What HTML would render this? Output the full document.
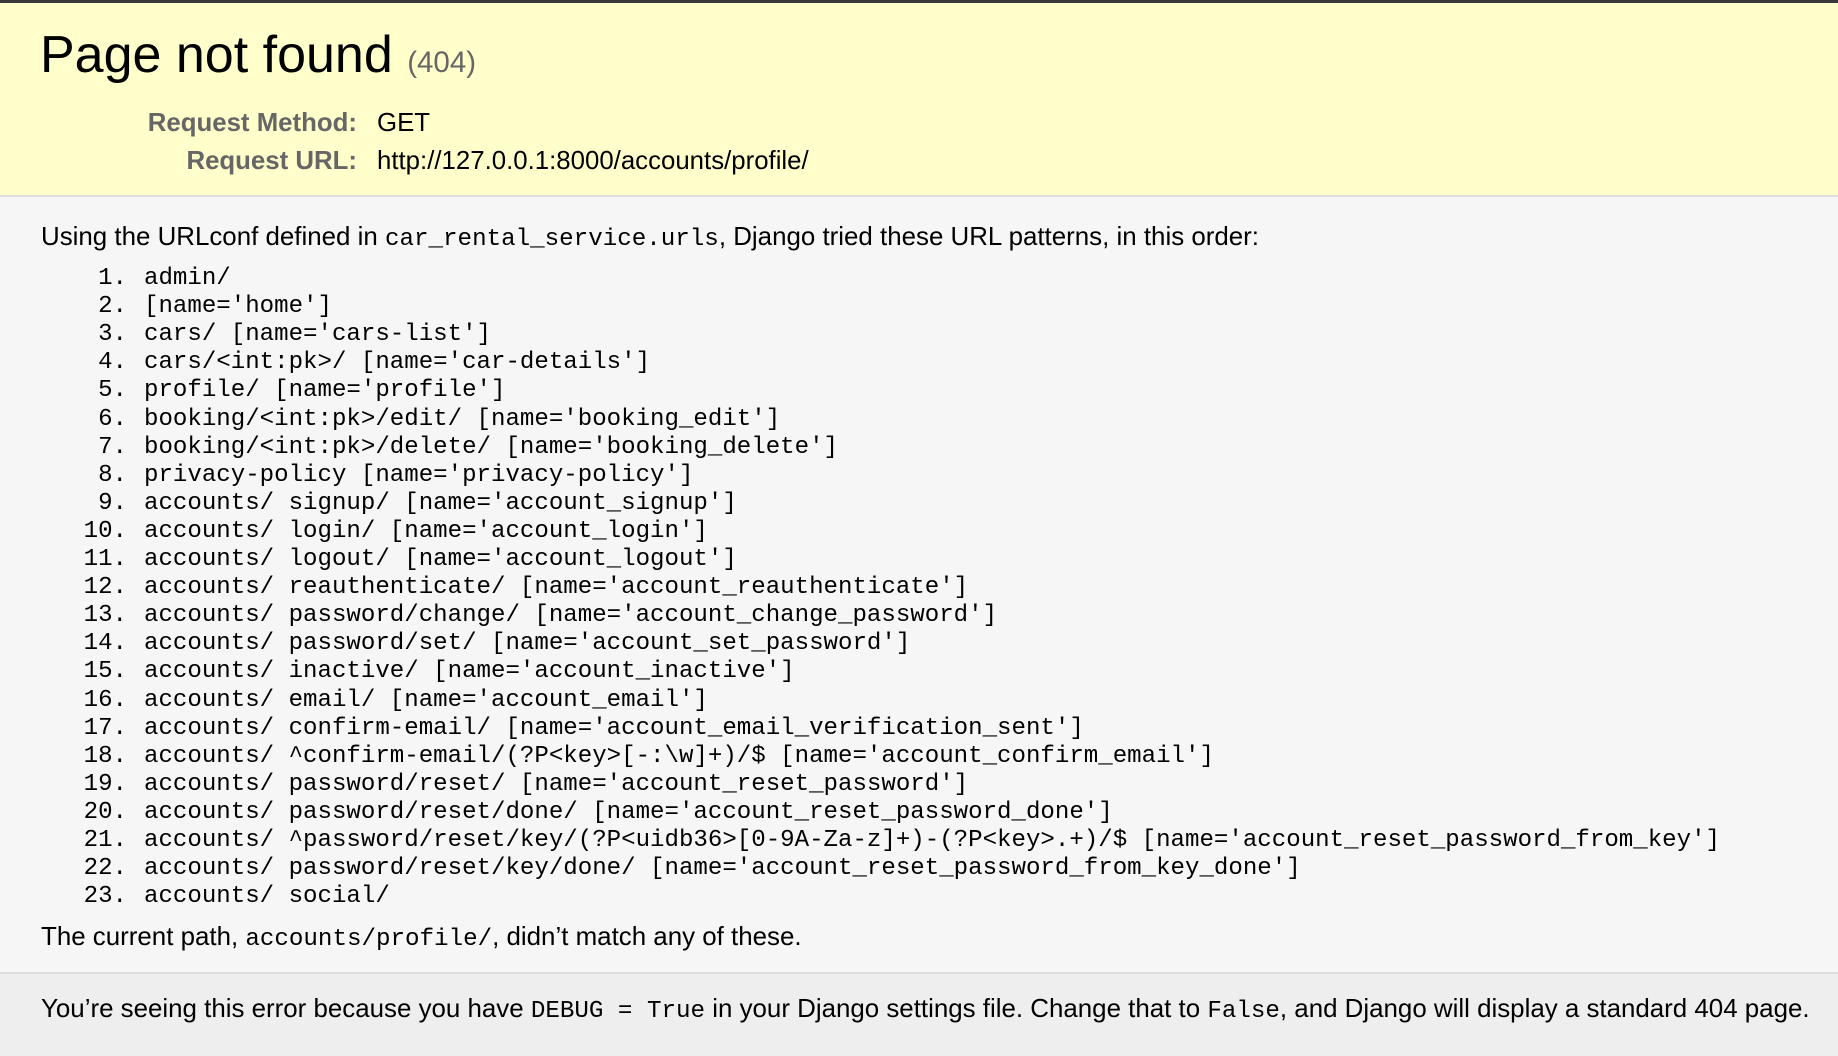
<!DOCTYPE html>
<html><head><meta charset="utf-8"><style>
html,body{margin:0;padding:0}
body{width:1838px;height:1054px;overflow:hidden;font-family:"Liberation Sans",Arial,sans-serif;background:#f6f6f6;color:#000;position:relative}
.hdr{position:absolute;left:0;top:0;width:1838px;height:197px;background:#ffffcc;border-top:3px solid #3a3a3a;border-bottom:2px solid #ddd;box-sizing:border-box}
h1{position:absolute;left:40px;top:23px;margin:0;font-weight:normal;font-size:52px;line-height:64px;white-space:nowrap}
h1 span{color:#666;font-size:29.5px}
.lab{position:absolute;font-weight:bold;color:#666;font-size:25.8px;text-align:right;width:340px;left:17px;white-space:nowrap}
.val{position:absolute;left:377px;font-size:25.8px;white-space:nowrap}
code{font-family:"Liberation Mono","DejaVu Sans Mono",monospace}
.p{position:absolute;left:41px;font-size:25.9px;white-space:nowrap}
.p code{font-size:24.2px}
.li{position:absolute;font-size:24.1px;white-space:nowrap;font-family:"Liberation Mono","DejaVu Sans Mono",monospace;line-height:28px}
.n{position:absolute;width:127px;text-align:right;left:0}
.t{position:absolute;left:144px}
.ftr{position:absolute;left:0;top:972px;width:1838px;height:82px;background:#eee;border-top:2px solid #ddd}
</style></head><body>
<div class="hdr"></div>
<h1>Page not found <span>(404)</span></h1>
<div class="lab" style="top:109px">Request Method:</div><div class="val" style="top:109px">GET</div>
<div class="lab" style="top:147px">Request URL:</div><div class="val" style="top:147px">http://127.0.0.1:8000/accounts/profile/</div>
<div class="p" style="top:223px">Using the URLconf defined in <code>car_rental_service.urls</code>, Django tried these URL patterns, in this order:</div>
<div class="li" style="top:265px;left:0;width:1838px">
<div style="position:relative">
<div class="n" style="top:0">1.</div><div class="t" style="top:0">admin/</div>
<div class="n" style="top:28.1px">2.</div><div class="t" style="top:28.1px">[name='home']</div>
<div class="n" style="top:56.2px">3.</div><div class="t" style="top:56.2px">cars/ [name='cars-list']</div>
<div class="n" style="top:84.3px">4.</div><div class="t" style="top:84.3px">cars/&lt;int:pk&gt;/ [name='car-details']</div>
<div class="n" style="top:112.4px">5.</div><div class="t" style="top:112.4px">profile/ [name='profile']</div>
<div class="n" style="top:140.5px">6.</div><div class="t" style="top:140.5px">booking/&lt;int:pk&gt;/edit/ [name='booking_edit']</div>
<div class="n" style="top:168.6px">7.</div><div class="t" style="top:168.6px">booking/&lt;int:pk&gt;/delete/ [name='booking_delete']</div>
<div class="n" style="top:196.7px">8.</div><div class="t" style="top:196.7px">privacy-policy [name='privacy-policy']</div>
<div class="n" style="top:224.8px">9.</div><div class="t" style="top:224.8px">accounts/ signup/ [name='account_signup']</div>
<div class="n" style="top:252.9px">10.</div><div class="t" style="top:252.9px">accounts/ login/ [name='account_login']</div>
<div class="n" style="top:281px">11.</div><div class="t" style="top:281px">accounts/ logout/ [name='account_logout']</div>
<div class="n" style="top:309.1px">12.</div><div class="t" style="top:309.1px">accounts/ reauthenticate/ [name='account_reauthenticate']</div>
<div class="n" style="top:337.2px">13.</div><div class="t" style="top:337.2px">accounts/ password/change/ [name='account_change_password']</div>
<div class="n" style="top:365.3px">14.</div><div class="t" style="top:365.3px">accounts/ password/set/ [name='account_set_password']</div>
<div class="n" style="top:393.4px">15.</div><div class="t" style="top:393.4px">accounts/ inactive/ [name='account_inactive']</div>
<div class="n" style="top:421.5px">16.</div><div class="t" style="top:421.5px">accounts/ email/ [name='account_email']</div>
<div class="n" style="top:449.6px">17.</div><div class="t" style="top:449.6px">accounts/ confirm-email/ [name='account_email_verification_sent']</div>
<div class="n" style="top:477.7px">18.</div><div class="t" style="top:477.7px">accounts/ ^confirm-email/(?P&lt;key&gt;[-:\w]+)/$ [name='account_confirm_email']</div>
<div class="n" style="top:505.8px">19.</div><div class="t" style="top:505.8px">accounts/ password/reset/ [name='account_reset_password']</div>
<div class="n" style="top:533.9px">20.</div><div class="t" style="top:533.9px">accounts/ password/reset/done/ [name='account_reset_password_done']</div>
<div class="n" style="top:562px">21.</div><div class="t" style="top:562px">accounts/ ^password/reset/key/(?P&lt;uidb36&gt;[0-9A-Za-z]+)-(?P&lt;key&gt;.+)/$ [name='account_reset_password_from_key']</div>
<div class="n" style="top:590.1px">22.</div><div class="t" style="top:590.1px">accounts/ password/reset/key/done/ [name='account_reset_password_from_key_done']</div>
<div class="n" style="top:618.2px">23.</div><div class="t" style="top:618.2px">accounts/ social/</div>
</div></div>
<div class="p" style="top:923px">The current path, <code>accounts/profile/</code>, didn’t match any of these.</div>
<div class="ftr"></div>
<div class="p" style="top:995px">You’re seeing this error because you have <code>DEBUG = True</code> in your Django settings file. Change that to <code>False</code>, and Django will display a standard 404 page.</div>
</body></html>
